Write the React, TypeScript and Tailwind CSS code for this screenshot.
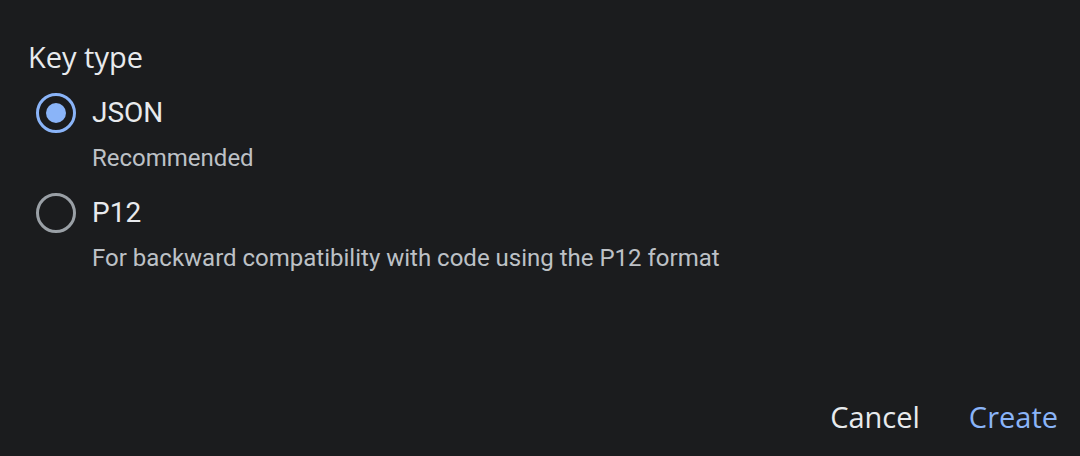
import { useState } from 'react';

const options = [
    { id: 'json', label: 'JSON', hint: 'Recommended' },
    { id: 'p12', label: 'P12', hint: 'For backward compatibility with code using the P12 format' },
];

function Radio({ checked }: { checked: boolean }) {
    return (
        <span
            className={`flex h-[40px] w-[40px] shrink-0 items-center justify-center rounded-full border-[3px] ${
                checked ? 'border-[#8ab4f8]' : 'border-[#9aa0a6]'
            }`}
        >
            {checked && <span className="h-[20px] w-[20px] rounded-full bg-[#8ab4f8]" />}
        </span>
    );
}

export default function App() {
    const [keyType, setKeyType] = useState('json');

    return (
        <div className="flex h-[456px] w-[1080px] flex-col bg-[#1b1c1e] font-['Roboto',sans-serif]">
            <div className="flex-1 pl-[28px] pt-[40px]">
                <h2 className="font-['Open_Sans',sans-serif] text-[29px] font-medium leading-[34px] text-[#e8eaed]">
                    Key type
                </h2>
                <div className="mt-[19px] flex flex-col">
                    {options.map((opt) => (
                        <label
                            key={opt.id}
                            className="flex cursor-pointer items-start gap-[16px] pl-[8px]"
                            onClick={() => setKeyType(opt.id)}
                        >
                            <Radio checked={keyType === opt.id} />
                            <div className="flex flex-col">
                                <span className="text-[28px] leading-[40px] text-[#e8eaed]">{opt.label}</span>
                                <span className="mt-[11px] mb-[21px] text-[24px] leading-[28px] text-[#bdc1c6]">
                                    {opt.hint}
                                </span>
                            </div>
                        </label>
                    ))}
                </div>
            </div>
            <div className="flex items-center justify-end gap-[49px] pb-[14px] pr-[22px] font-['Open_Sans',sans-serif] text-[29px] font-medium">
                <button className="py-[4px] text-[#e8eaed]">Cancel</button>
                <button className="py-[4px] text-[#8ab4f8]">Create</button>
            </div>
        </div>
    );
}
